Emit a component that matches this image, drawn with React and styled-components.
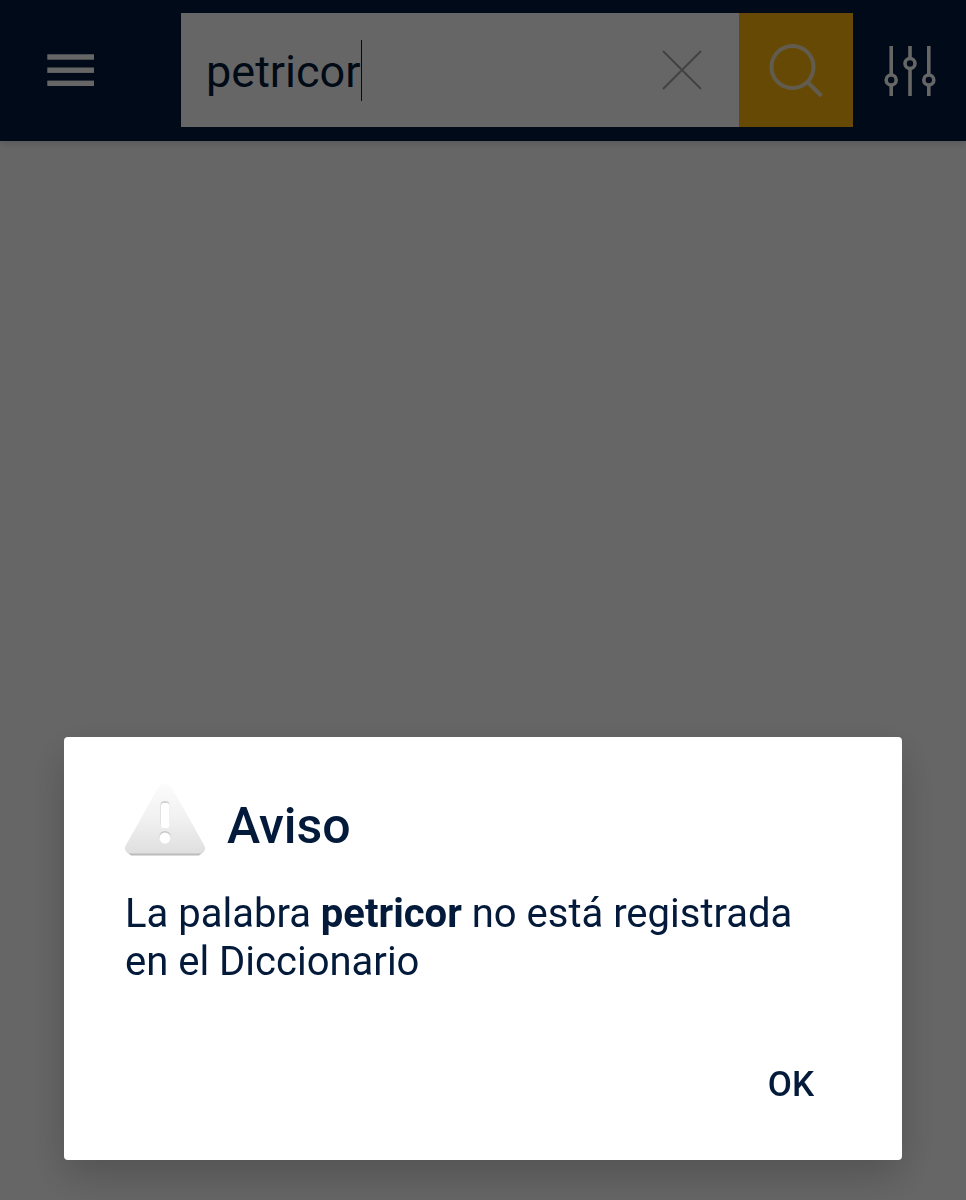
import { useState } from 'react';
import styled, { createGlobalStyle } from 'styled-components';

const GlobalStyle = createGlobalStyle`
  *, *::before, *::after {
    box-sizing: border-box;
  }

  body {
    margin: 0;
    background: #fff;
    color: #041a3a;
    font-family: Roboto, "Liberation Sans", sans-serif;
  }

  button, input {
    font: inherit;
    color: inherit;
  }
`;

const Page = styled.div`
  min-height: 100vh;
`;

const Header = styled.header`
  display: flex;
  align-items: center;
  padding: 13px 0 14px;
  background: #001b3c;
  box-shadow: 0 2px 8px rgba(0, 0, 0, 0.16);
`;

const IconButton = styled.button`
  display: flex;
  align-items: center;
  justify-content: center;
  flex: none;
  width: ${({ $width }) => $width}px;
  height: 114px;
  padding: 0;
  border: 0;
  background: ${({ $background }) => $background || 'transparent'};
`;

const MenuButton = styled(IconButton)`
  margin-right: 40px;
`;

const SearchForm = styled.form`
  display: flex;
  flex: 1;
  min-width: 0;
`;

const Field = styled.div`
  display: flex;
  align-items: center;
  flex: 1;
  min-width: 0;
  padding-left: 25px;
  background: #fff;
`;

const SearchInput = styled.input`
  field-sizing: content;
  min-width: 0;
  padding: 4px 0 0;
  border: 0;
  outline: 0;
  background: transparent;
  font-size: 45px;
  line-height: 60px;
`;

const Caret = styled.span`
  flex: none;
  width: 1px;
  height: 61px;
  background: #001b3c;
`;

const ClearButton = styled(IconButton)`
  margin-left: auto;
`;

const Overlay = styled.div`
  position: fixed;
  inset: 0;
  display: flex;
  flex-direction: column;
  justify-content: flex-end;
  padding: 40px 64px;
  background: rgba(0, 0, 0, 0.6);
`;

const Dialog = styled.section`
  display: flex;
  flex-direction: column;
  padding: 46px 61px 39px;
  border-radius: 4px;
  background: #fff;
  box-shadow: 0 16px 40px rgba(0, 0, 0, 0.2);
`;

const DialogHeader = styled.div`
  display: flex;
  align-items: center;
  gap: 22px;
`;

const Title = styled.h1`
  margin: 0;
  padding-top: 13px;
  font-size: 50px;
  font-weight: 500;
  line-height: 60px;
`;

const Message = styled.p`
  margin: 34px 0 0;
  font-size: 40px;
  line-height: 48px;
`;

const Actions = styled.div`
  display: flex;
  justify-content: flex-end;
  margin-top: 63px;
`;

const ActionButton = styled.button`
  padding: 12px 27px;
  border: 0;
  background: transparent;
  font-size: 35px;
  font-weight: 500;
  line-height: 48px;
`;

const MenuIcon = () => (
  <svg width="48" height="32" viewBox="0 0 48 32" fill="#fff" aria-hidden="true">
    <rect x="0.3" y="0.3" width="46.7" height="5.4" />
    <rect x="0.3" y="13.5" width="46.7" height="5.4" />
    <rect x="0.3" y="26.6" width="46.7" height="5.4" />
  </svg>
);

const ClearIcon = () => (
  <svg width="40" height="40" viewBox="0 0 40 40" fill="none" stroke="#a6a6a6" strokeWidth="2" aria-hidden="true">
    <path d="M1 1L39 39M39 1L1 39" />
  </svg>
);

const SearchIcon = () => (
  <svg width="54" height="54" viewBox="0 0 54 54" fill="none" stroke="#f5e6c4" strokeWidth="4" aria-hidden="true">
    <circle cx="23.5" cy="24" r="21" />
    <path d="M38.5 39L52.5 53" />
  </svg>
);

const FiltersIcon = () => (
  <svg width="52" height="52" viewBox="0 -2 52 52" fill="none" stroke="#fff" strokeWidth="3.6" aria-hidden="true">
    <path d="M7.2 0V29M7.2 39V50M26 0V12.5M26 22.5V50M44.8 0V29M44.8 39V50" />
    <circle cx="7.2" cy="34" r="5" />
    <circle cx="26" cy="17.5" r="5" />
    <circle cx="44.8" cy="34" r="5" />
  </svg>
);

const WarningIcon = () => (
  <svg width="80" height="72" viewBox="0 0 80 72" aria-hidden="true">
    <defs>
      <linearGradient id="warning-fill" x1="0" y1="0" x2="0" y2="1">
        <stop offset="0" stopColor="#fcfcfc" />
        <stop offset="0.5" stopColor="#f1f1f1" />
        <stop offset="1" stopColor="#dfdfdf" />
      </linearGradient>
      <linearGradient id="warning-edge" x1="0" y1="0" x2="0" y2="1">
        <stop offset="0.5" stopColor="#f4f4f4" />
        <stop offset="1" stopColor="#bababa" />
      </linearGradient>
    </defs>
    <path d="M33 5Q40 -4 47 5L79 62Q81 66 77 69L74 71.5H6L3 69Q-1 66 1 62Z" fill="url(#warning-edge)" />
    <path d="M33 4Q40 -5 47 4L79 61Q82 69 74 69.5H6Q-2 69 1 61Z" fill="url(#warning-fill)" />
    <rect x="35.5" y="17" width="9" height="26" rx="4" fill="#d2d2d2" />
    <rect x="36" y="19" width="8.5" height="25" rx="3" fill="#fff" />
    <circle cx="40" cy="52.5" r="5.6" fill="#c6c6c6" />
    <circle cx="40" cy="54" r="5.5" fill="#fff" />
  </svg>
);

export default function App() {
  const [word, setWord] = useState('petricor');
  const [open, setOpen] = useState(true);

  return (
    <>
      <GlobalStyle />
      <Page>
        <Header>
          <MenuButton type="button" $width={141} aria-label="Menú">
            <MenuIcon />
          </MenuButton>
          <SearchForm onSubmit={(e) => e.preventDefault()}>
            <Field>
              <SearchInput
                type="text"
                aria-label="Buscar palabra"
                value={word}
                onChange={(e) => setWord(e.target.value)}
              />
              <Caret />
              <ClearButton type="button" $width={114} aria-label="Borrar" onClick={() => setWord('')}>
                <ClearIcon />
              </ClearButton>
            </Field>
            <IconButton type="submit" $width={114} $background="#ffb70d" aria-label="Buscar">
              <SearchIcon />
            </IconButton>
          </SearchForm>
          <IconButton type="button" $width={113} aria-label="Opciones">
            <FiltersIcon />
          </IconButton>
        </Header>
      </Page>
      {open && (
        <Overlay>
          <Dialog role="alertdialog" aria-modal="true" aria-labelledby="aviso-title" aria-describedby="aviso-text">
            <DialogHeader>
              <WarningIcon />
              <Title id="aviso-title">Aviso</Title>
            </DialogHeader>
            <Message id="aviso-text">
              La palabra <strong>petricor</strong> no está registrada en el Diccionario
            </Message>
            <Actions>
              <ActionButton type="button" onClick={() => setOpen(false)}>OK</ActionButton>
            </Actions>
          </Dialog>
        </Overlay>
      )}
    </>
  );
}
